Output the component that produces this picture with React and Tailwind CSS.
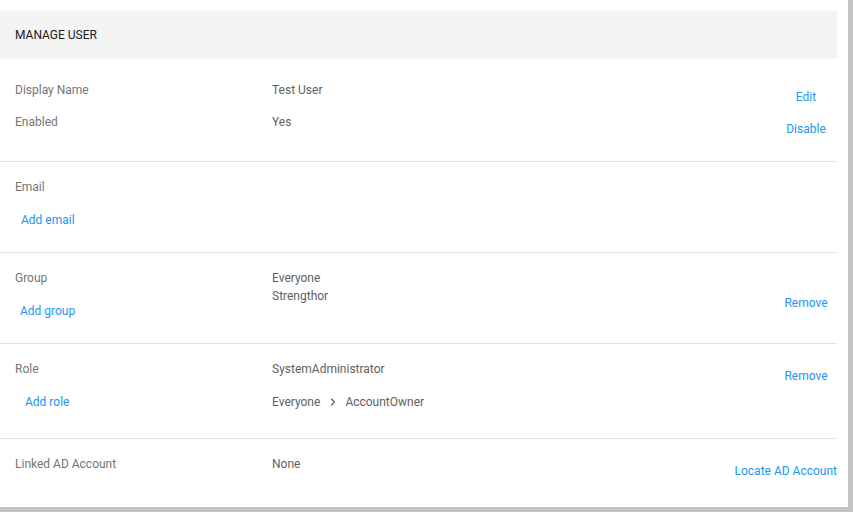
import { ChevronRight } from "lucide-react";

const link = "text-[#2196f3] cursor-pointer hover:underline whitespace-nowrap";
const label = "text-[#757575]";
const value = "text-[#616161]";

function Section({ left, middle, right, rightPt, height, leftPt = "pt-[17px]", last = false, rightAlign = "items-center" }) {
    return (
        <div className={`flex ${height} ${last ? "" : "border-b border-[#e4e4e4]"}`}>
            <div className={`w-[272px] pl-[15px] ${leftPt} flex flex-col`}>{left}</div>
            <div className={`flex-1 ${leftPt} flex flex-col`}>{middle}</div>
            <div className={`w-[62px] ${rightPt} flex flex-col ${rightAlign}`}>{right}</div>
        </div>
    );
}

export default function App() {
    return (
        <div className="w-[853px] h-[512px] bg-[#c4c4c4] overflow-hidden" style={{ fontFamily: "Roboto, 'Liberation Sans', sans-serif" }}>
            <div className="w-[848px] h-[507px] bg-white pt-[11px] text-[12px] leading-4">
                <div className="w-[837px]">
                    <div className="h-[48px] bg-[#f4f4f4] flex items-center pl-[15px] text-[#212121]">
                        MANAGE USER
                    </div>

                    <Section
                        height="h-[103px]"
                        leftPt="pt-[23px]"
                        rightPt="pt-[30px]"
                        left={<>
                            <span className={label}>Display Name</span>
                            <span className={`${label} mt-4`}>Enabled</span>
                        </>}
                        middle={<>
                            <span className={value}>Test User</span>
                            <span className={`${value} mt-4`}>Yes</span>
                        </>}
                        right={<>
                            <span className={link}>Edit</span>
                            <span className={`${link} mt-4`}>Disable</span>
                        </>}
                    />

                    <Section
                        height="h-[91px]"
                        rightPt="pt-[17px]"
                        left={<>
                            <span className={label}>Email</span>
                            <span className={`${link} mt-[17px] ml-[6px]`}>Add email</span>
                        </>}
                        middle={null}
                        right={null}
                    />

                    <Section
                        height="h-[91px]"
                        rightPt="pt-[42px]"
                        left={<>
                            <span className={label}>Group</span>
                            <span className={`${link} mt-[17px] ml-[5px]`}>Add group</span>
                        </>}
                        middle={<>
                            <span className={value}>Everyone</span>
                            <span className={`${value} mt-[2px]`}>Strengthor</span>
                        </>}
                        right={<span className={link}>Remove</span>}
                    />

                    <Section
                        height="h-[95px]"
                        rightPt="pt-[24px]"
                        left={<>
                            <span className={label}>Role</span>
                            <span className={`${link} mt-[17px] ml-[10px]`}>Add role</span>
                        </>}
                        middle={<>
                            <span className={value}>SystemAdministrator</span>
                            <span className={`${value} mt-[17px] flex items-center`}>
                                Everyone
                                <ChevronRight size={12} strokeWidth={2.5} className="ml-[7px] mr-[6px] text-[#616161]" />
                                AccountOwner
                            </span>
                        </>}
                        right={<span className={link}>Remove</span>}
                    />

                    <Section
                        height="h-[68px]"
                        rightPt="pt-[24px]"
                        rightAlign="items-end"
                        last
                        left={<span className={label}>Linked AD Account</span>}
                        middle={<span className={value}>None</span>}
                        right={<span className={link}>Locate AD Account</span>}
                    />
                </div>
            </div>
        </div>
    );
}
